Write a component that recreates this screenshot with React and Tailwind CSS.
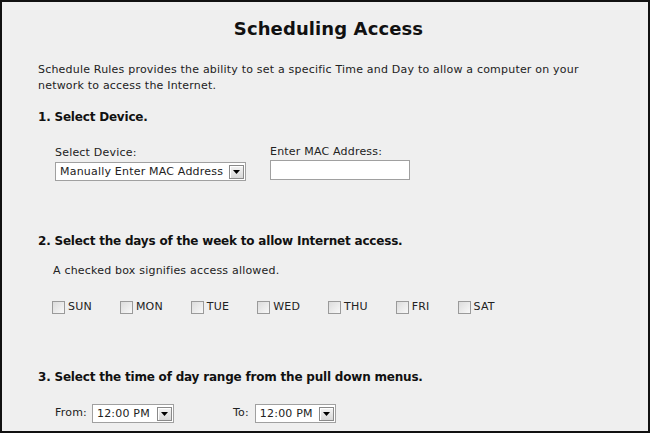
import React from "react";

const DAYS = ["SUN", "MON", "TUE", "WED", "THU", "FRI", "SAT"];

const Arrow = () => (
  <span className="flex h-[14px] w-[15px] items-center justify-center border border-[#8a8a8a] bg-gradient-to-b from-[#f4f4f4] to-[#d8d8d8] shadow-[inset_1px_1px_0_#ffffff]">
    <svg width="7" height="4" viewBox="0 0 7 4">
      <path d="M0 0h7L3.5 4z" fill="#000" />
    </svg>
  </span>
);

const Dropdown = ({ value, width }) => (
  <div
    className={`flex h-[19px] items-center justify-between border border-[#a0a0a0] bg-white pl-[4px] pr-[1px] ${width}`}
  >
    <span className="text-[11px] leading-none text-[#222]">{value}</span>
    <Arrow />
  </div>
);

const Heading = ({ children, className = "" }) => (
  <h2 className={`text-[12px] font-bold leading-4 tracking-[-0.2px] text-[#111] ${className}`}>
    {children}
  </h2>
);

export default function App() {
  return (
    <div className="h-[433px] w-[650px] border-2 border-[#111] bg-[#efefef] font-['DejaVu_Sans',Verdana,sans-serif] tracking-[0.2px] text-[#222]">
      <h1 className="pl-[7px] pt-[15px] text-center text-[18px] font-bold leading-6 tracking-[0.1px] text-[#111]">
        Scheduling Access
      </h1>

      <div className="px-[36px]">
        <p className="mt-[21px] text-[11px] leading-4">
          Schedule Rules provides the ability to set a specific Time and Day to allow a computer on your
          <br />
          network to access the Internet.
        </p>

        <Heading className="mt-[15px]">1. Select Device.</Heading>

        <div className="mt-[21px] flex gap-[24px] pl-[17px]">
          <div className="flex flex-col">
            <span className="text-[11px] leading-[14px]">Select Device:</span>
            <div className="mt-[2px]">
              <Dropdown value="Manually Enter MAC Address" width="w-[191px]" />
            </div>
          </div>
          <div className="flex flex-col">
            <span className="-mt-[1px] text-[11px] leading-[14px]">Enter MAC Address:</span>
            <div className="mt-[1px] h-[20px] w-[140px] border border-[#a0a0a0] bg-white" />
          </div>
        </div>

        <Heading className="mt-[52px]">2. Select the days of the week to allow Internet access.</Heading>

        <p className="mt-[15px] pl-[15px] text-[11px] leading-[14px]">
          A checked box signifies access allowed.
        </p>

        <div className="mt-[22px] flex items-center gap-[28px] pl-[14px]">
          {DAYS.map((d) => (
            <label key={d} className="flex items-center gap-[3px]">
              <span className="h-[13px] w-[13px] border border-[#9a9a9a] bg-gradient-to-br from-[#dcdcdc] to-[#f8f8f8]" />
              <span className="text-[11px] leading-[14px]">{d}</span>
            </label>
          ))}
        </div>

        <Heading className="mt-[55px]">3. Select the time of day range from the pull down menus.</Heading>

        <div className="mt-[19px] flex items-center pl-[17px]">
          <span className="mr-[5px] text-[11px]">From:</span>
          <Dropdown value="12:00 PM" width="w-[82px]" />
          <span className="ml-[59px] mr-[6px] text-[11px]">To:</span>
          <Dropdown value="12:00 PM" width="w-[81px]" />
        </div>
      </div>
    </div>
  );
}
